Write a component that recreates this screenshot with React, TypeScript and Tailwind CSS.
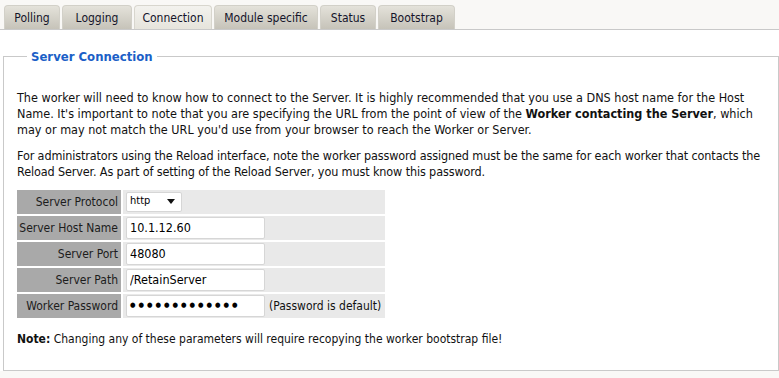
import React from 'react';

const tabs = [
  { label: 'Polling', w: 'w-[56px]' },
  { label: 'Logging', w: 'w-[70px]' },
  { label: 'Connection', w: 'w-[78px]', active: true },
  { label: 'Module specific', w: 'w-[104px]' },
  { label: 'Status', w: 'w-[56px]' },
  { label: 'Bootstrap', w: 'w-[77px]' },
];

const fieldRow = 'flex gap-[2px] h-[24px] text-[12px] whitespace-nowrap';
const labelCell = 'w-[104px] bg-[#a9a9a9] flex items-center justify-end pr-[3px] text-[#1c1c1c]';
const valueCell = 'w-[262px] bg-[#e9e9e9] flex items-center pl-[3px]';
const boxBase = 'w-[139px] h-[22px] bg-white border border-[#d6d6d6] rounded-[2px] px-[3px] text-black outline-none';

function Row({ label, children }: { label: string; children: React.ReactNode }) {
  return (
    <div className={fieldRow}>
      <div className={labelCell}>{label}</div>
      <div className={valueCell}>{children}</div>
    </div>
  );
}

export default function App() {
  return (
    <div className="w-[779px] h-[378px] bg-[#f9f8f6] text-[12.5px] text-[#111] font-['DejaVu_Sans_Condensed','DejaVu_Sans',sans-serif]">
      <div className="flex gap-[2px] pl-[4px] pt-[5px] border-b border-[#c9c9c9] text-[12px]">
        {tabs.map((t) => (
          <div
            key={t.label}
            className={
              t.w +
              ' h-[24px] flex items-center justify-center rounded-t-[4px] border border-b-0 text-[#14142a] ' +
              (t.active
                ? 'bg-gradient-to-b from-[#f3f2ee] to-[#e6e4dc] border-[#d8d6ce]'
                : 'bg-gradient-to-b from-[#e4e2da] to-[#c6c3b9] border-[#d2d0c8]')
            }
          >
            {t.label}
          </div>
        ))}
      </div>

      <div className="bg-white h-[341px] pl-[3px]">
        <div className="pt-[17px] h-full">
          <fieldset className="border border-[#c9c9c9] h-[324px] pl-[13px] pr-[3px]">
            <legend className="ml-[10px] px-[4px] text-[13px] font-bold text-[#1b5fc7]">Server Connection</legend>
            <p className="mt-[23px] leading-[16px]">
              The worker will need to know how to connect to the Server. It is highly recommended that you use a DNS host name for the Host Name. It's important to note that you are specifying the URL from the point of view of the <b>Worker contacting the Server</b>, which may or may not match the URL you'd use from your browser to reach the Worker or Server.
            </p>
            <p className="mt-[10px] leading-[16px] tracking-[-0.12px]">
              For administrators using the Reload interface, note the worker password assigned must be the same for each worker that contacts the Reload Server. As part of setting of the Reload Server, you must know this password.
            </p>

            <div className="mt-[10px] flex flex-col gap-[2px]">
              <Row label="Server Protocol">
                <div className="w-[56px] h-[20px] bg-white border border-[#d6d6d6] rounded-[2px] flex items-center justify-between pl-[3px] pr-[6px] text-[11px] text-black">
                  <span>http</span>
                  <svg width="8" height="5" viewBox="0 0 8 5"><path d="M0 0h8L4 5z" fill="#111" /></svg>
                </div>
              </Row>
              <Row label="Server Host Name">
                <input className={boxBase + ' text-[12.5px]'} readOnly defaultValue="10.1.12.60" />
              </Row>
              <Row label="Server Port">
                <input className={boxBase + ' text-[12.5px]'} readOnly defaultValue="48080" />
              </Row>
              <Row label="Server Path">
                <input className={boxBase + ' text-[12.5px]'} readOnly defaultValue="/RetainServer" />
              </Row>
              <Row label="Worker Password">
                <div className={boxBase + ' flex items-center text-[7px] tracking-[3px]'}>●●●●●●●●●●●●●</div>
                <span className="ml-[4px]">(Password is default)</span>
              </Row>
            </div>

            <p className="mt-[12px] text-[12px]">
              <b>Note:</b> Changing any of these parameters will require recopying the worker bootstrap file!
            </p>
          </fieldset>
        </div>
      </div>
    </div>
  );
}
